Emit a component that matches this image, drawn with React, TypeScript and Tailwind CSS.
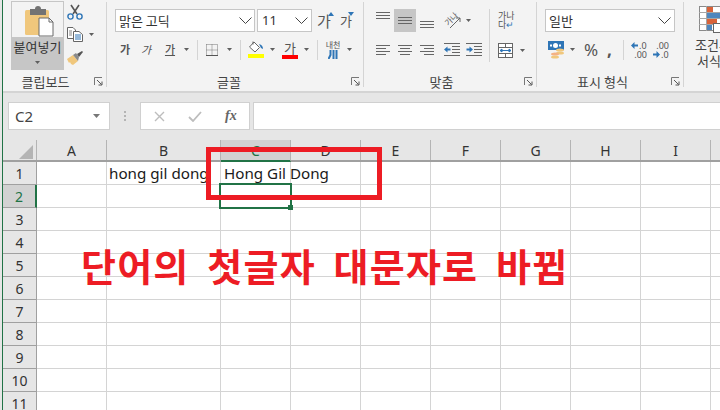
import type { ReactNode } from "react";

const COLS = [
  { name: "A", w: "w-[70px]" },
  { name: "B", w: "w-[114px]" },
  { name: "C", w: "w-[70px]" },
  { name: "D", w: "w-[70px]" },
  { name: "E", w: "w-[70px]" },
  { name: "F", w: "w-[70px]" },
  { name: "G", w: "w-[70px]" },
  { name: "H", w: "w-[70px]" },
  { name: "I", w: "w-[70px]" },
  { name: "", w: "w-[70px]" },
];

const ROWS = [1, 2, 3, 4, 5, 6, 7, 8, 9, 10, 11];

function Arrow({ className = "" }: { className?: string }) {
  return (
    <svg width="5" height="3" viewBox="0 0 5 3" className={`shrink-0 ${className}`}>
      <path d="M0 0h5L2.5 3z" fill="#5f5f5f" />
    </svg>
  );
}

function Sep({ className = "" }: { className?: string }) {
  return <div className={`w-px shrink-0 bg-[#d4d4d4] ${className}`} />;
}

function Chevron({ className = "" }: { className?: string }) {
  return (
    <svg width="13" height="7" viewBox="0 0 13 7" className={`shrink-0 ${className}`}>
      <path d="M0.5 0.5L6.5 6.5L12.5 0.5" fill="none" stroke="#444" strokeWidth="1" />
    </svg>
  );
}

function Launcher() {
  return (
    <svg width="9" height="9" viewBox="0 0 9 9" className="shrink-0">
      <path d="M0.5 8V0.5H8" fill="none" stroke="#777" />
      <path d="M3 3L7.5 7.5M8 4.5V8H4.5" fill="none" stroke="#555" />
    </svg>
  );
}

function Group({
  w,
  label,
  labelClass = "",
  launcher = true,
  children,
}: {
  w: string;
  label: string;
  labelClass?: string;
  launcher?: boolean;
  children: ReactNode;
}) {
  return (
    <div className={`flex h-full shrink-0 ${w}`}>
      <div className="flex min-w-0 flex-1 flex-col">
        <div className="h-[71px]">{children}</div>
        <div className="flex h-[20px] items-center pr-[3px]">
          <span className={`flex-1 text-center text-[13px] leading-none text-[#444] ${labelClass}`}>{label}</span>
          {launcher && <Launcher />}
        </div>
      </div>
      <Sep className="mt-[2px] h-[85px] bg-[#c6c6c6]" />
    </div>
  );
}

function PasteIcon() {
  return (
    <svg width="51" height="35" viewBox="0 0 51 35">
      <rect x="13" y="8" width="24" height="25" rx="1.5" fill="#f0c77c" />
      <path d="M18 7h5q0-3 3-3t3 3h5v6H18z" fill="#737373" />
      <path d="M27 16h10l4 4v14H27z" fill="#fff" stroke="#6b6b6b" />
      <path d="M37 16v4h4" fill="none" stroke="#6b6b6b" />
    </svg>
  );
}

function ScissorsIcon() {
  return (
    <svg width="16" height="16" viewBox="0 0 16 16">
      <path d="M4 1l6 9M12 1L6 10" stroke="#555" strokeWidth="1.6" fill="none" />
      <circle cx="3.5" cy="12.5" r="2.6" fill="none" stroke="#2e75b6" strokeWidth="1.4" />
      <circle cx="12.5" cy="12.5" r="2.6" fill="none" stroke="#2e75b6" strokeWidth="1.4" />
    </svg>
  );
}

function CopyIcon() {
  return (
    <svg width="16" height="15" viewBox="0 0 16 15">
      <path d="M6 11.5H0.5V0.5H6l2.5 2.5V4" fill="#fff" stroke="#666" />
      <path d="M6.5 4.5h5.5l3.5 3v7h-9z" fill="#fff" stroke="#666" />
      <path d="M8 8h6M8 10h6M8 12h6" stroke="#2e75b6" />
      <path d="M2 4h3M2 6h3M2 8h3" stroke="#888" />
    </svg>
  );
}

function BrushIcon() {
  return (
    <svg width="17" height="16" viewBox="0 0 17 16">
      <path d="M0 9l6-4 5 6-5 4-2-1-1-2-1 1z" fill="#f0c77c" />
      <path d="M6 5l3-2 3 4-1 4z" fill="#8a8a8a" />
      <path d="M10 4l5-3 1 1-4 5z" fill="#555" />
    </svg>
  );
}

function BorderIcon() {
  return (
    <svg width="12" height="12" viewBox="0 0 12 12">
      <path d="M0.5 0.5H11.5V11.5M0.5 0.5V11.5M6 0.5V11.5M0.5 6H11.5" fill="none" stroke="#777" strokeDasharray="1 1" />
      <path d="M0 11.5H12" stroke="#555" />
    </svg>
  );
}

function FillIcon() {
  return (
    <div className="flex w-[16px] flex-col">
      <svg width="16" height="13" viewBox="0 0 16 13">
        <path d="M6 1l5.5 5.5L7 11 1.5 6z" fill="#fff" stroke="#666" />
        <path d="M5 0.5v3" stroke="#666" />
        <path d="M11 3q4 1 4 5l-2-1z" fill="#2e75b6" />
      </svg>
      <div className="h-[4px] bg-[#ffff00]" />
    </div>
  );
}

function AlignLines({ kind }: { kind: "left" | "center" | "right" }) {
  const d =
    kind === "left"
      ? "M0 .5h14M0 3.5h10M0 6.5h14M0 9.5h10"
      : kind === "center"
        ? "M0 .5h14M2 3.5h10M0 6.5h14M2 9.5h10"
        : "M0 .5h14M4 3.5h10M0 6.5h14M4 9.5h10";
  return (
    <svg width="14" height="10" viewBox="0 0 14 10" className="shrink-0">
      <path d={d} stroke="#666" />
    </svg>
  );
}

function VAlign() {
  return (
    <svg width="14" height="7" viewBox="0 0 14 7" className="shrink-0">
      <path d="M0 .5h14M0 3.5h14M0 6.5h14" stroke="#666" />
    </svg>
  );
}

function IndentIcon({ out }: { out?: boolean }) {
  return (
    <svg width="16" height="13" viewBox="0 0 16 13" className="shrink-0">
      <path d="M0 .5h16M8 3.5h8M8 6.5h8M8 9.5h8M0 12.5h16" stroke="#666" />
      {out ? (
        <path d="M0 6.5l3.5-3v2h3v2h-3v2z" fill="#2e75b6" />
      ) : (
        <path d="M7 6.5l-3.5-3v2h-3v2h3v2z" fill="#2e75b6" />
      )}
    </svg>
  );
}

function MergeIcon() {
  return (
    <svg width="15" height="15" viewBox="0 0 15 15">
      <rect x="0.5" y="0.5" width="14" height="14" fill="#fff" stroke="#666" />
      <path d="M0.5 4.5h14M0.5 10.5h14M7.5 0.5v4M7.5 10.5v4" stroke="#666" />
      <path d="M2 7.5h11M2 7.5l2-1.5v3zM13 7.5l-2-1.5v3z" stroke="#2e75b6" fill="#2e75b6" />
    </svg>
  );
}

function MoneyIcon() {
  return (
    <svg width="17" height="18" viewBox="0 0 17 18">
      <rect x="0" y="0" width="16" height="9" fill="#2e75b6" />
      <circle cx="7.5" cy="4.5" r="2.5" fill="#fff" />
      <rect x="2" y="3.5" width="2" height="2" fill="#fff" />
      <rect x="11" y="3.5" width="2" height="2" fill="#fff" />
      <ellipse cx="12" cy="9" rx="4" ry="1.6" fill="#f0c77c" />
      <ellipse cx="12" cy="12" rx="4" ry="1.6" fill="#f0c77c" />
      <ellipse cx="7" cy="13" rx="4" ry="1.6" fill="#f4b183" />
      <ellipse cx="7" cy="16" rx="4" ry="1.6" fill="#f0c77c" />
    </svg>
  );
}

function SmallArrow({ left }: { left?: boolean }) {
  return (
    <svg width="7" height="7" viewBox="0 0 7 7" className="shrink-0">
      {left ? (
        <path d="M0 3.5L3.5 0v2.5H7v2H3.5V7z" fill="#2e75b6" />
      ) : (
        <path d="M7 3.5L3.5 0v2.5H0v2h3.5V7z" fill="#2e75b6" />
      )}
    </svg>
  );
}

function CondIcon() {
  return (
    <svg width="24" height="27" viewBox="0 0 24 27" className="shrink-0">
      <rect x="0.5" y="0.5" width="23" height="24" fill="#fff" stroke="#8a8a8a" />
      <path d="M0 6.5h24M0 12.5h24M0 18.5h24M7.5 0v25" stroke="#a6a6a6" />
      <rect x="8" y="1" width="6" height="5" fill="#d9633a" />
      <rect x="8" y="7" width="16" height="5" fill="#4f86bd" />
      <rect x="8" y="13" width="10" height="5" fill="#d9633a" />
      <rect x="8" y="19" width="5" height="5" fill="#4f86bd" />
      <rect x="14.5" y="17.5" width="9.5" height="9" fill="#fff" stroke="#666" />
    </svg>
  );
}

export default function App() {
  return (
    <div className="relative flex h-[410px] w-[720px] overflow-hidden bg-white font-['Noto_Sans_CJK_KR',sans-serif]">
      <div className="w-[2px] shrink-0 bg-[#e6e6e6]" />
      <div className="w-px shrink-0 bg-[#217346]" />

      <div className="flex min-w-0 flex-1 flex-col">
        {/* ribbon */}
        <div className="flex h-[93px] shrink-0 border-b-2 border-[#d4d4d4] bg-[#f3f3f3]">
          <Group w="w-[104px]" label="클립보드" labelClass="pr-[6px]">
            <div className="flex pl-[8px] pt-[1px]">
              <div className="flex h-[69px] w-[53px] flex-col">
                <div className="h-[36px] border border-b-0 border-[#c6c6c6]">
                  <PasteIcon />
                </div>
                <div className="flex flex-1 flex-col items-center bg-[#c6c6c6]">
                  <span className="mt-[1px] text-[13px] leading-[18px] text-[#333]">붙여넣기</span>
                  <Arrow className="mt-[5px]" />
                </div>
              </div>
              <div className="ml-[3px] flex flex-col pt-[3px]">
                <ScissorsIcon />
                <div className="mt-[7px] flex items-center">
                  <CopyIcon />
                  <Arrow className="ml-[6px]" />
                </div>
                <div className="mt-[8px]">
                  <BrushIcon />
                </div>
              </div>
            </div>
          </Group>

          <Group w="w-[257px]" label="글꼴">
            <div className="flex items-center pl-[8px] pt-[9px]">
              <div className="flex h-[23px] w-[140px] items-center justify-between border border-[#c6c6c6] bg-white pl-[3px] pr-[2px] text-[13px] leading-none text-[#333]">
                <span>맑은 고딕</span>
                <Chevron />
              </div>
              <div className="ml-[2px] flex h-[23px] w-[55px] items-center justify-between border border-[#c6c6c6] bg-white pl-[4px] pr-[3px] font-['Noto_Sans',sans-serif] text-[13px] leading-none text-[#333]">
                <span>11</span>
                <Chevron />
              </div>
              <div className="ml-[5px] flex w-[17px] flex-col items-end">
                <svg width="6" height="4" viewBox="0 0 6 4" className="-mb-[3px]">
                  <path d="M0 4L3 0l3 4z" fill="#2e75b6" />
                </svg>
                <span className="w-full text-[15px] leading-[16px] text-[#555]">가</span>
              </div>
              <div className="ml-[6px] flex w-[14px] flex-col items-end">
                <svg width="6" height="4" viewBox="0 0 6 4" className="-mb-[3px]">
                  <path d="M0 0L3 4l3-4z" fill="#2e75b6" />
                </svg>
                <span className="w-full text-[13px] leading-[16px] text-[#555]">가</span>
              </div>
            </div>
            <div className="mt-[6px] flex h-[23px] items-center pl-[8px]">
              <span className="w-[20px] text-center text-[11px] font-bold leading-none text-[#555]">가</span>
              <span className="ml-[1px] w-[20px] text-center text-[11px] italic leading-none text-[#555]">가</span>
              <span className="ml-[4px] w-[20px] text-center text-[11px] font-medium leading-none text-[#555] underline">가</span>
              <Arrow className="ml-[4px]" />
              <Sep className="ml-[8px] h-[20px]" />
              <div className="ml-[8px]">
                <BorderIcon />
              </div>
              <Arrow className="ml-[9px]" />
              <Sep className="ml-[8px] h-[20px]" />
              <div className="ml-[7px]">
                <FillIcon />
              </div>
              <Arrow className="ml-[6px]" />
              <div className="ml-[7px] flex w-[16px] flex-col items-center">
                <span className="h-[13px] text-[13px] leading-[13px] text-[#555]">가</span>
                <div className="mt-[1px] h-[4px] w-full bg-[#ff0000]" />
              </div>
              <Arrow className="ml-[6px]" />
              <Sep className="ml-[8px] h-[20px]" />
              <div className="ml-[7px] flex w-[16px] flex-col items-center">
                <span className="whitespace-nowrap text-[8px] leading-[10px] text-[#555]">내천</span>
                <svg width="11" height="9" viewBox="0 0 11 9">
                  <path d="M2.5 0v5L0.5 9M5.5 0v9M8.5 0v9" fill="none" stroke="#2e75b6" strokeWidth="2" />
                </svg>
              </div>
              <Arrow className="ml-[6px]" />
            </div>
          </Group>

          <Group w="w-[173px]" label="맞춤" labelClass="pr-[5px]">
            <div className="flex h-full">
              <div className="flex w-[125px] flex-col">
                <div className="mt-[9px] flex h-[23px] items-stretch pl-[12px]">
                  <div className="flex w-[14px] items-start pt-[3px]">
                    <VAlign />
                  </div>
                  <div className="ml-[4px] flex w-[22px] items-center justify-center bg-[#c6c6c6]">
                    <VAlign />
                  </div>
                  <div className="ml-[4px] flex w-[14px] items-end pb-[4px]">
                    <VAlign />
                  </div>
                  <div className="relative ml-[10px] flex w-[17px] items-center justify-center">
                    <span className="-mt-[3px] -ml-[2px] -rotate-45 whitespace-nowrap text-[8px] leading-none text-[#555]">가나</span>
                    <svg width="12" height="12" viewBox="0 0 12 12" className="absolute bottom-[3px] right-0">
                      <path d="M1 11L11 1M11 1H7M11 1V5" fill="none" stroke="#666" />
                    </svg>
                  </div>
                  <div className="ml-[5px] flex items-center">
                    <Arrow />
                  </div>
                </div>
                <div className="mt-[6px] flex h-[23px] items-center pl-[12px]">
                  <AlignLines kind="left" />
                  <div className="ml-[8px]">
                    <AlignLines kind="center" />
                  </div>
                  <div className="ml-[8px]">
                    <AlignLines kind="right" />
                  </div>
                  <div className="ml-[10px]">
                    <IndentIcon out />
                  </div>
                  <div className="ml-[6px]">
                    <IndentIcon />
                  </div>
                </div>
              </div>
              <Sep className="mt-[9px] h-[53px]" />
              <div className="flex flex-col pl-[8px]">
                <div className="mt-[11px] flex h-[18px] w-[18px] flex-col whitespace-nowrap text-[9px] leading-[9px] text-[#555]">
                  <span>가나</span>
                  <span className="flex items-center">
                    다<span className="text-[#2e75b6]">↵</span>
                  </span>
                </div>
                <div className="mt-[14px] flex items-center">
                  <MergeIcon />
                  <Arrow className="ml-[7px]" />
                </div>
              </div>
            </div>
          </Group>

          <Group w="w-[147px]" label="표시 형식" labelClass="pr-[3px]">
            <div className="pl-[8px] pt-[9px]">
              <div className="flex h-[23px] w-[130px] items-center justify-between border border-[#c6c6c6] bg-white pl-[3px] pr-[3px] text-[13px] leading-none text-[#333]">
                <span>일반</span>
                <Chevron />
              </div>
            </div>
            <div className="mt-[6px] flex h-[23px] items-center pl-[11px]">
              <MoneyIcon />
              <Arrow className="ml-[5px]" />
              <span className="ml-[9px] w-[14px] text-center font-['Noto_Sans',sans-serif] text-[17px] leading-none text-[#555]">%</span>
              <span className="ml-[9px] w-[6px] font-['Noto_Sans',sans-serif] text-[17px] font-bold leading-none text-[#555]">,</span>
              <Sep className="ml-[10px] h-[20px]" />
              <div className="ml-[7px] flex w-[16px] flex-col font-['Noto_Sans',sans-serif] text-[9px] leading-[9px] text-[#555]">
                <span className="flex items-center">
                  <SmallArrow left />
                  <span className="ml-[1px]">.0</span>
                </span>
                <span className="text-right">.00</span>
              </div>
              <div className="ml-[6px] flex w-[16px] flex-col font-['Noto_Sans',sans-serif] text-[9px] leading-[9px] text-[#555]">
                <span className="text-right">.00</span>
                <span className="flex items-center">
                  <SmallArrow />
                  <span className="ml-[1px]">.0</span>
                </span>
              </div>
            </div>
          </Group>

          <div className="flex min-w-0 flex-1 flex-col overflow-hidden pl-[11px] pt-[6px]">
            <div className="pl-[4px]">
              <CondIcon />
            </div>
            <span className="mt-[4px] whitespace-nowrap text-[13px] leading-[16px] text-[#444]">조건부</span>
            <span className="whitespace-nowrap pl-[2px] text-[13px] leading-[16px] text-[#444]">서식</span>
          </div>
        </div>

        {/* formula bar */}
        <div className="flex h-[47px] shrink-0 items-start bg-[#e6e6e6] pl-[5px] pt-[9px]">
          <div className="flex h-[28px] w-[102px] items-center justify-between border border-[#d0d0d0] bg-white pl-[6px] pr-[9px] font-['Noto_Sans',sans-serif] text-[15px] text-[#444]">
            <span>C2</span>
            <svg width="7" height="4" viewBox="0 0 7 4">
              <path d="M0 0h7L3.5 4z" fill="#777" />
            </svg>
          </div>
          <div className="ml-[14px] mt-[9px] flex h-[10px] w-[2px] flex-col justify-between">
            <div className="h-[2px] bg-[#b4b4b4]" />
            <div className="h-[2px] bg-[#b4b4b4]" />
            <div className="h-[2px] bg-[#b4b4b4]" />
          </div>
          <div className="ml-[14px] flex h-[28px] w-[110px] items-center border border-[#d0d0d0] bg-white pl-[13px]">
            <svg width="11" height="11" viewBox="0 0 11 11">
              <path d="M1 1l9 9M10 1l-9 9" stroke="#bdbdbd" strokeWidth="1.4" />
            </svg>
            <svg width="14" height="11" viewBox="0 0 14 11" className="ml-[23px]">
              <path d="M1 6l4 4 8-9" fill="none" stroke="#bdbdbd" strokeWidth="1.8" />
            </svg>
            <span className="ml-[23px] font-['Liberation_Serif',serif] text-[14px] font-bold italic leading-none text-[#666]">fx</span>
          </div>
          <div className="ml-[3px] h-[28px] flex-1 border-y border-l border-[#d0d0d0] bg-white" />
        </div>

        {/* column headers */}
        <div className="flex h-[22px] shrink-0 border-b-2 border-[#a0a0a0] bg-[#e6e6e6] font-['Noto_Sans',sans-serif] text-[14px] text-[#333]">
          <div className="flex w-[34px] shrink-0 items-end justify-end border-r border-[#b4b4b4] pb-[1px] pr-[3px]">
            <svg width="14" height="14" viewBox="0 0 14 14">
              <path d="M14 0v14H0z" fill="#b4b4b4" />
            </svg>
          </div>
          {COLS.map((c) => (
            <div
              key={c.name}
              className={`flex shrink-0 items-center justify-center border-r border-[#b4b4b4] ${c.w} ${c.name === "C" ? "-mb-[2px] border-b-2 border-b-[#217346] bg-[#d2d2d2] text-[#217346]" : ""}`}
            >
              {c.name}
            </div>
          ))}
        </div>

        {/* sheet */}
        {ROWS.map((r) => (
          <div key={r} className="flex h-[23px] shrink-0 font-['Noto_Sans',sans-serif] text-[15.2px] leading-[22px] text-[#1a1a1a]">
            <div
              className={`flex w-[34px] shrink-0 items-center justify-center border-b border-[#a0a0a0] pt-[1px] text-[14px] ${
                r === 2
                  ? "border-r-2 border-r-[#217346] bg-[#d2d2d2] text-[#217346]"
                  : "border-r border-r-[#a0a0a0] bg-[#e6e6e6] text-[#333]"
              }`}
            >
              {r}
            </div>
            {COLS.map((c) => (
              <div key={c.name} className={`shrink-0 whitespace-nowrap border-b border-r border-[#d4d4d4] ${c.w} ${c.name === "B" ? "pl-[2px]" : c.name === "C" ? "pl-[3px]" : ""}`}>
                {r === 1 && c.name === "B" && "hong gil dong"}
                {r === 1 && c.name === "C" && "Hong Gil Dong"}
              </div>
            ))}
          </div>
        ))}
      </div>

      {/* selected cell */}
      <div className="absolute left-[219px] top-[183px] h-[26px] w-[73px] border-2 border-[#217346]" />
      <div className="absolute left-[288px] top-[205px] h-[5px] w-[5px] bg-[#217346]" />

      {/* annotation */}
      <div className="absolute left-[81px] top-[244px] whitespace-nowrap text-[38px] font-bold leading-[42px] tracking-[1.2px] text-[#ed1c24] [word-spacing:8px]">
        단어의 첫글자 대문자로 바뀜
      </div>
      <div className="absolute left-[206px] top-[147px] h-[53px] w-[176px] border-[5px] border-[#ed1c24]" />
    </div>
  );
}
